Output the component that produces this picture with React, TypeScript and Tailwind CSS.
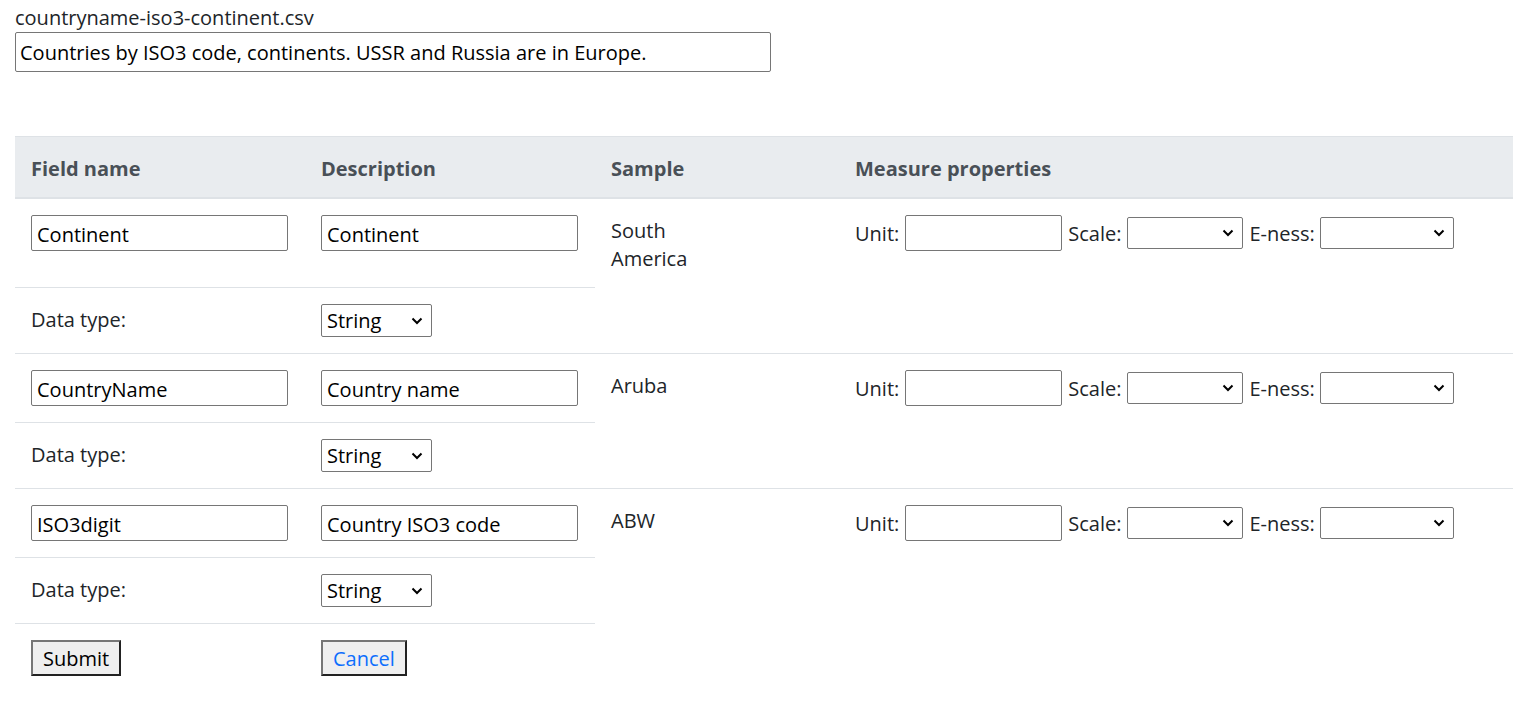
import { useState } from "react"

type Field = {
  name: string
  desc: string
  sample: string[]
  tall?: boolean
}

const fields: Field[] = [
  { name: "Continent", desc: "Continent", sample: ["South", "America"], tall: true },
  { name: "CountryName", desc: "Country name", sample: ["Aruba"] },
  { name: "ISO3digit", desc: "Country ISO3 code", sample: ["ABW"] },
]

function Chevron() {
  return (
    <svg
      width="12"
      height="8"
      viewBox="0 0 12 8"
      className="pointer-events-none absolute right-[9px] top-1/2 -translate-y-1/2"
    >
      <polyline points="1.5,1.5 6,6 10.5,1.5" fill="none" stroke="#000" strokeWidth="2" />
    </svg>
  )
}

function Select({ value, width, height }: { value?: string; width: string; height: string }) {
  return (
    <div className={`relative ${width} ${height}`}>
      <select
        defaultValue={value ?? ""}
        className="h-full w-full appearance-none rounded-[2px] border border-[#767676] bg-white pl-[5px] pt-[1px] text-[20px] leading-[28px] text-black outline-none"
      >
        <option value="">{""}</option>
        <option value="String">String</option>
        <option value="Number">Number</option>
      </select>
      <Chevron />
    </div>
  )
}

function TextInput({ value, width }: { value: string; width: string }) {
  const [v, setV] = useState(value)
  return (
    <input
      value={v}
      onChange={(e) => setV(e.target.value)}
      className={`${width} h-[36px] rounded-[2px] border border-[#767676] px-[5px] pt-[2px] text-[20px] leading-[28px] text-black outline-none`}
    />
  )
}

export default function App() {
  const [title, setTitle] = useState("Countries by ISO3 code, continents. USSR and Russia are in Europe.")

  return (
    <div className="min-h-screen bg-white px-[15px] pt-[4px] text-[20px] leading-[28px] text-[#212529] [font-family:'Open_Sans',sans-serif]">
      <div className="h-[28px]">countryname-iso3-continent.csv</div>
      <input
        value={title}
        onChange={(e) => setTitle(e.target.value)}
        className="h-[40px] w-[756px] rounded-[2px] border border-[#767676] px-[4px] pt-[1px] text-[20px] text-black outline-none"
      />

      <table className="mt-[64px] w-[1498px] table-fixed border-collapse">
        <colgroup>
          <col className="w-[290px]" />
          <col className="w-[290px]" />
          <col className="w-[244px]" />
          <col className="w-[674px]" />
        </colgroup>
        <thead>
          <tr className="border-t border-b-2 border-t-[#dee2e6] border-b-[#dee2e6] bg-[#e9ecef] text-left font-bold text-[#495057]">
            <th className="px-4 pt-[18px] pb-[14px]">Field name</th>
            <th className="px-4 pt-[18px] pb-[14px]">Description</th>
            <th className="px-4 pt-[18px] pb-[14px]">Sample</th>
            <th className="px-4 pt-[18px] pb-[14px]">Measure properties</th>
          </tr>
        </thead>
        <tbody>
          {fields.map((f, i) => {
            const last = i === fields.length - 1
            const topPad = f.tall ? "pt-4 pb-[36px]" : "py-4"
            return [
              <tr key={f.name + "-a"}>
                <td className={`border-b border-[#dee2e6] px-4 align-top ${topPad}`}>
                  <TextInput value={f.name} width="w-[257px]" />
                </td>
                <td className={`border-b border-[#dee2e6] px-4 align-top ${topPad}`}>
                  <TextInput value={f.desc} width="w-[257px]" />
                </td>
                <td
                  rowSpan={2}
                  className={`px-4 pt-[18px] align-top ${last ? "" : "border-b border-[#dee2e6]"}`}
                >
                  {f.sample.map((s) => (
                    <div key={s}>{s}</div>
                  ))}
                </td>
                <td
                  rowSpan={2}
                  className={`px-4 pt-4 align-top ${last ? "" : "border-b border-[#dee2e6]"}`}
                >
                  <div className="flex h-[36px] items-center">
                    <span className="pt-[2px]">Unit:</span>
                    <span className="ml-[6px]">
                      <TextInput value="" width="w-[157px]" />
                    </span>
                    <span className="ml-[6px] pt-[2px]">Scale:</span>
                    <span className="ml-[6px]">
                      <Select width="w-[116px]" height="h-[32px]" />
                    </span>
                    <span className="ml-[6px] pt-[2px]">E-ness:</span>
                    <span className="ml-[5px]">
                      <Select width="w-[134px]" height="h-[32px]" />
                    </span>
                  </div>
                </td>
              </tr>,
              <tr key={f.name + "-b"}>
                <td className="border-b border-[#dee2e6] px-4 pt-[18px] pb-[14px] align-top">Data type:</td>
                <td className="border-b border-[#dee2e6] px-4 py-4 align-top">
                  <Select value="String" width="w-[111px]" height="h-[33px]" />
                </td>
              </tr>,
            ]
          })}
          <tr>
            <td className="px-4 pt-4 pb-4 align-top">
              <button className="h-[36px] border-2 border-t-[#767676] border-l-[#767676] border-r-[#222] border-b-[#222] bg-[#efefef] px-[10px] pt-[1px] text-[20px] leading-[28px] text-black">
                Submit
              </button>
            </td>
            <td className="px-4 pt-4 pb-4 align-top">
              <button className="h-[36px] border-2 border-t-[#767676] border-l-[#767676] border-r-[#222] border-b-[#222] bg-[#efefef] px-[10px] pt-[1px] text-[20px] leading-[28px] text-[#0d6efd]">
                Cancel
              </button>
            </td>
            <td></td>
            <td></td>
          </tr>
        </tbody>
      </table>
    </div>
  )
}
